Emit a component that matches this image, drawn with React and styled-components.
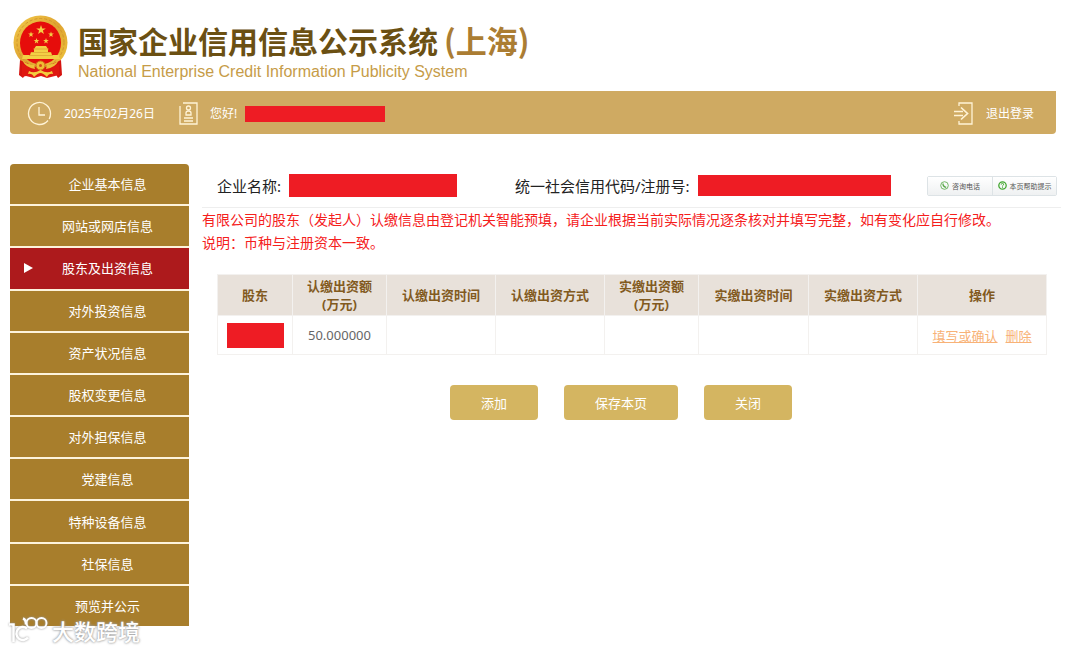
import React from 'react';
import styled, { createGlobalStyle } from 'styled-components';

const GlobalStyle = createGlobalStyle`
  * {
    box-sizing: border-box;
  }
  body {
    margin: 0;
    background: #fff;
    font-family: "Noto Sans", "Noto Sans CJK SC", sans-serif;
    font-size: 13px;
  }
`;

const Page = styled.div`
  position: relative;
  min-height: 100vh;
  padding: 14px 24px 0 10px;
`;

const Header = styled.header`
  display: flex;
  align-items: flex-start;
  gap: 8px;
  height: 77px;
  padding-left: 2px;
`;

const Titles = styled.div`
  padding-top: 6px;
`;

const Title = styled.h1`
  margin: 0;
  font: 700 30px/40px "Noto Sans CJK SC", sans-serif;
  color: #6b5013;
  white-space: nowrap;
`;

const City = styled.span`
  margin-left: 6px;
  font-size: 31px;
  color: #ab7d33;
`;

const Subtitle = styled.p`
  margin: 0;
  font: 16px/24px "Liberation Sans", Arial, sans-serif;
  color: #c69c48;
`;

const TopBar = styled.div`
  display: flex;
  align-items: center;
  height: 43px;
  padding: 2px 22px 0 17px;
  border-radius: 0 0 4px 4px;
  background: #cfaa62;
  color: #fff;
  line-height: 20px;
`;

const BarText = styled.span`
  margin: 0 24px 0 12px;
  font-size: 12px;
`;

const Greeting = styled.span`
  margin: 0 8px 0 12px;
  font-size: 12px;
`;

const Logout = styled.a`
  display: flex;
  align-items: center;
  gap: 13px;
  margin-left: auto;
  font-size: 12px;
  color: #fff;
  text-decoration: none;
`;

const Redacted = styled.span`
  display: inline-block;
  width: ${props => props.$width}px;
  height: ${props => props.$height}px;
  background: #ee1c24;
  vertical-align: middle;
`;

const Body = styled.div`
  display: flex;
  align-items: flex-start;
  gap: 13px;
  padding-top: 30px;
`;

const Menu = styled.nav`
  display: grid;
  grid-auto-rows: 1fr;
  gap: 2px;
  flex: 0 0 179px;
  min-height: 462px;
  border-radius: 4px 4px 0 0;
  background: #fdf3dc;
  overflow: hidden;
`;

const MenuItem = styled.a`
  position: relative;
  display: flex;
  align-items: center;
  justify-content: center;
  padding: 0 0 1px 16px;
  background: ${props => (props.$active ? '#ad1a1c' : '#a87e2c')};
  color: #fff;
  text-decoration: none;
`;

const Arrow = styled.svg`
  position: absolute;
  left: 14px;
`;

const Main = styled.main`
  flex: 1;
  min-width: 0;
`;

const Company = styled.div`
  display: flex;
  align-items: center;
  height: 44px;
  margin-right: -5px;
  padding: 0 4px 0 15px;
  border-bottom: 1px solid #eee;
  font-size: 15px;
  color: #222;
  white-space: nowrap;
`;

const Field = styled.div`
  display: flex;
  align-items: center;
  gap: 8px;
  margin-right: ${props => props.$space || 0}px;
`;

const HelpGroup = styled.div`
  display: flex;
  margin-left: auto;
  border: 1px solid #dde3e6;
  border-radius: 2px;
`;

const HelpButton = styled.button`
  display: flex;
  align-items: center;
  justify-content: center;
  gap: 3px;
  width: 64px;
  height: 18px;
  padding: 0;
  border: 0;
  background: linear-gradient(#fff, #eff1f2);
  font: 7px/12px "Noto Sans CJK SC", sans-serif;
  color: #555;
  white-space: nowrap;

  & + & {
    border-left: 1px solid #dde3e6;
  }
`;

const Notice = styled.p`
  margin: 0;
  font-size: 14px;
  line-height: 23px;
  color: #f5201c;
  white-space: nowrap;
`;

const Table = styled.table`
  width: calc(100% - 24px);
  margin: 20px 9px 0 15px;
  border-collapse: collapse;
  table-layout: fixed;
  text-align: center;

  th,
  td {
    padding: 0;
    border: 1px solid #f3f1ef;
  }
  th {
    height: 41px;
    background: #e8e1da;
    color: #825a1e;
    font-weight: 700;
    line-height: 18px;
  }
  td {
    height: 39px;
    color: #666;
  }
`;

const RowLink = styled.a`
  color: #f8b277;

  & + & {
    margin-left: 8px;
  }
`;

const Actions = styled.div`
  display: flex;
  justify-content: center;
  gap: 26px;
  margin-top: 30px;
  padding-right: 16px;
`;

const Button = styled.button`
  height: 35px;
  padding: 0 31px;
  border: 0;
  border-radius: 4px;
  background: #d4b561;
  color: #fff;
  font: inherit;
`;

const Watermark = styled.div`
  position: absolute;
  left: 8px;
  top: 615px;
  display: flex;
  align-items: center;
  gap: 4px;
  font: 500 22px/22px "Noto Sans CJK SC", sans-serif;
  color: #fff;
  text-shadow: 0 0 2px #999, 0 0 3px #aaa;
  pointer-events: none;

  svg {
    filter: drop-shadow(0 0 1px #999);
  }
`;

const menu = [
  '企业基本信息',
  '网站或网店信息',
  '股东及出资信息',
  '对外投资信息',
  '资产状况信息',
  '股权变更信息',
  '对外担保信息',
  '党建信息',
  '特种设备信息',
  '社保信息',
  '预览并公示',
];

const columns = [
  { title: '股东', width: 75 },
  { title: '认缴出资额', unit: '(万元)', width: 94 },
  { title: '认缴出资时间', width: 109 },
  { title: '认缴出资方式', width: 109 },
  { title: '实缴出资额', unit: '(万元)', width: 94 },
  { title: '实缴出资时间', width: 110 },
  { title: '实缴出资方式', width: 109 },
  { title: '操作', width: 129 },
];

const tableWidth = columns.reduce((sum, column) => sum + column.width, 0);

const star = 'M0-5 1.2-1.6 4.8-1.5 1.9.6 2.9 4 0 2-2.9 4-1.9.6-4.8-1.5-1.2-1.6Z';

const Emblem = () => (
  <svg width="58" height="66" viewBox="0 0 58 66" aria-hidden="true">
    <defs>
      <linearGradient id="gold" x1="0" y1="0" x2="1" y2="1">
        <stop offset="0" stopColor="#f3cb4b" />
        <stop offset=".5" stopColor="#dfa431" />
        <stop offset="1" stopColor="#efc63d" />
      </linearGradient>
    </defs>
    <ellipse cx="28.5" cy="28.5" rx="27" ry="27" fill="url(#gold)" />
    <ellipse cx="28.5" cy="28.5" rx="23.5" ry="24" fill="none" stroke="#d2962c" strokeWidth="1" strokeDasharray="3 2" />
    <ellipse cx="28.5" cy="29" rx="20.5" ry="21.5" fill="#e60d0b" />
    <g fill="#f3cf45">
      <path d={star} transform="translate(29 16)" />
      <path d={star} transform="translate(19 20.500) scale(.6)" />
      <path d={star} transform="translate(39 20.500) scale(.6)" />
      <path d={star} transform="translate(24.500 27) scale(.6)" />
      <path d={star} transform="translate(34 27) scale(.6)" />
      <path d="m22 35 2-3h10l2 3v3h3l1 3h7l1 4H10l1-4h7l1-3h3Z" />
    </g>
    <path d="M21 35h16M19 38.500h20M17 41.500h24" stroke="#d6982a" strokeWidth=".6" />
    <path d="M8 46q7 3 9 4l-2 7-4 7-4-3Zm41 0q-7 3-9 4l2 7 4 7 4-3Z" fill="#d5130f" />
    <path d="M10 50q8 3 18.500 3T47 50v11l-8 2-4 1-6-2-7 2-8-2-4 1Z" fill="#df1710" />
    <path d="M10 46q5 5 12 5l1 4q-9-1-13-9Zm37 0q-5 5-12 5l-1 4q9-1 13-9Z" fill="#edbf38" />
    <circle cx="28.5" cy="51.500" r="4.500" fill="#f0bd34" stroke="#ce7418" />
    <circle cx="28.5" cy="51.500" r="1.500" fill="#d8471a" />
    <path d="M17 57q5 3 11.500-1Q35 60 40 57l1 3q-4-1-6 3-4-4-6.500-4T22 63q-2-4-6-3Z" fill="#f3cd3e" />
  </svg>
);

const Clock = () => (
  <svg width="25" height="25" viewBox="0 0 25 25" fill="none" stroke="#fff3d6" strokeWidth="1.300" aria-hidden="true">
    <path d="M21 19.5A11 11 0 1 1 23.500 13c0 2-.5 3.500-1.300 5M12 6v8h6" />
  </svg>
);

const Badge = () => (
  <svg width="19" height="23" viewBox="0 0 19 23" fill="none" stroke="#fff3d6" strokeWidth="1.300" aria-hidden="true">
    <path d="M4 1h14v21H1V4M5 16h9M5 19h9" />
    <circle cx="9.500" cy="6" r="2" />
    <path d="M7 13v-2q0-2 2.500-2t2.500 2v2Z" />
  </svg>
);

const Exit = () => (
  <svg width="19" height="23" viewBox="0 0 19 23" fill="none" stroke="#fff3d6" strokeWidth="1.300" aria-hidden="true">
    <path d="M5 4V1h13v21H5v-3" />
    <path d="M0 9.500h9M0 13.500h9M7 5.500l6.500 6-6.500 6" strokeWidth="1.700" />
  </svg>
);

const Phone = () => (
  <svg width="9" height="9" viewBox="0 0 9 9" fill="none" stroke="#55a845" aria-hidden="true">
    <circle cx="4.500" cy="4.500" r="3.800" strokeWidth=".8" />
    <path d="M3 2.500q-.2 3.200 3.200 3.800" strokeWidth="1.300" />
  </svg>
);

const Question = () => (
  <svg width="9" height="9" viewBox="0 0 9 9" fill="none" stroke="#44a832" aria-hidden="true">
    <circle cx="4.500" cy="4.500" r="3.700" strokeWidth="1.300" />
    <path d="M3.200 3.600q.1-1.300 1.400-1.200 1.400.2 1 1.400l-1.100 1V5.500m0 .6v.7" />
  </svg>
);

const App = () => (
  <Page>
    <GlobalStyle />
    <Header>
      <Emblem />
      <Titles>
        <Title>国家企业信用信息公示系统<City>(上海)</City></Title>
        <Subtitle>National Enterprise Credit Information Publicity System</Subtitle>
      </Titles>
    </Header>
    <TopBar>
      <Clock />
      <BarText>2025年02月26日</BarText>
      <Badge />
      <Greeting>您好!</Greeting>
      <Redacted $width={140} $height={16} />
      <Logout href="#logout">
        <Exit />
        退出登录
      </Logout>
    </TopBar>
    <Body>
      <Menu>
        {menu.map((label, index) => (
          <MenuItem href={`#menu-${index}`} key={label} $active={index === 2}>
            {index === 2 && (
              <Arrow width="9" height="12" viewBox="0 0 9 12" aria-hidden="true">
                <path d="M0 1v10l9-5Z" fill="#fff" />
              </Arrow>
            )}
            {label}
          </MenuItem>
        ))}
      </Menu>
      <Main>
        <Company>
          <Field $space={58}>
            企业名称:
            <Redacted $width={168} $height={23} />
          </Field>
          <Field>
            统一社会信用代码/注册号:
            <Redacted $width={193} $height={21} />
          </Field>
          <HelpGroup>
            <HelpButton type="button"><Phone />咨询电话</HelpButton>
            <HelpButton type="button"><Question />本页帮助提示</HelpButton>
          </HelpGroup>
        </Company>
        <Notice>
          有限公司的股东（发起人）认缴信息由登记机关智能预填，请企业根据当前实际情况逐条核对并填写完整，如有变化应自行修改。
          <br />
          说明：币种与注册资本一致。
        </Notice>
        <Table>
          <colgroup>
            {columns.map(column => (
              <col key={column.title} style={{ width: `${(column.width / tableWidth) * 100}%` }} />
            ))}
          </colgroup>
          <thead>
            <tr>
              {columns.map(column => (
                <th key={column.title} scope="col">
                  {column.title}
                  {column.unit && <br />}
                  {column.unit}
                </th>
              ))}
            </tr>
          </thead>
          <tbody>
            <tr>
              <td><Redacted $width={57} $height={25} /></td>
              <td>50.000000</td>
              <td />
              <td />
              <td />
              <td />
              <td />
              <td>
                <RowLink href="#edit">填写或确认</RowLink>
                <RowLink href="#delete">删除</RowLink>
              </td>
            </tr>
          </tbody>
        </Table>
        <Actions>
          <Button type="button">添加</Button>
          <Button type="button">保存本页</Button>
          <Button type="button">关闭</Button>
        </Actions>
      </Main>
    </Body>
    <Watermark>
      <svg width="40" height="30" viewBox="0 0 40 30" fill="none" stroke="#fff" strokeWidth="2.500" aria-hidden="true">
        <path d="M1 9.500h4.500V27M20 22.500a6.500 6.500 0 1 1-1-9M15 3.500q3 1 3 6" />
        <circle cx="23.500" cy="8" r="5" strokeWidth="2" />
        <circle cx="33.500" cy="8" r="5" strokeWidth="2" />
      </svg>
      <span>大数跨境</span>
    </Watermark>
  </Page>
);

export default App;
